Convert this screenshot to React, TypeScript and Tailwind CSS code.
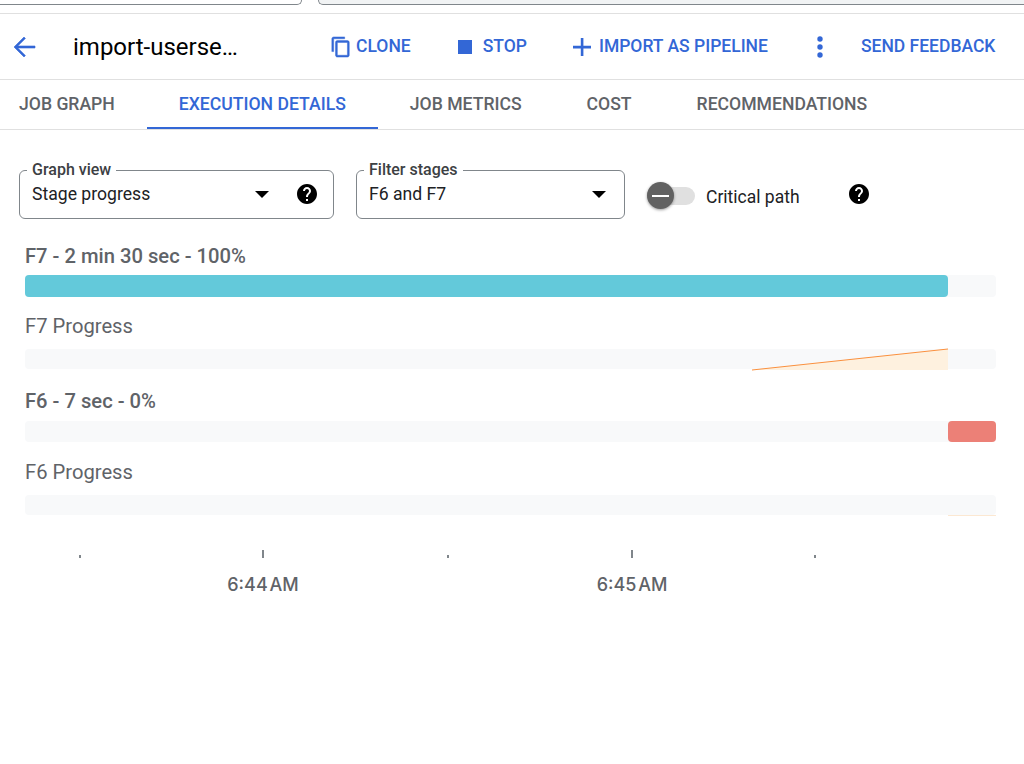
import React from 'react';

const BLUE = '#3367d6';

const HelpIcon = () => (
  <svg width="24" height="24" viewBox="0 0 24 24" fill="#000" className="shrink-0">
    <path d="M12 2C6.48 2 2 6.48 2 12s4.48 10 10 10 10-4.48 10-10S17.52 2 12 2zm1 17h-2v-2h2v2zm2.07-7.75l-.9.92C13.45 12.9 13 13.5 13 15h-2v-.5c0-1.1.45-2.1 1.17-2.83l1.24-1.26c.37-.36.59-.86.59-1.41 0-1.1-.9-2-2-2s-2 .9-2 2H8c0-2.21 1.79-4 4-4s4 1.79 4 4c0 .88-.36 1.68-.93 2.25z" />
  </svg>
);

const Caret = () => (
  <svg width="14" height="7" viewBox="0 0 14 7" fill="#000" className="shrink-0">
    <path d="M0 0h14L7 7z" />
  </svg>
);

const Select = ({ label, value, width, help }: { label: string; value: string; width: string; help?: boolean }) => (
  <div className={`relative h-[49px] ${width} shrink-0 rounded-[6px] border border-[#80868b] pl-[12px] pr-[14px] pt-[10px] flex items-start`}>
    <span className="absolute -top-[10px] left-[7px] bg-white px-[5px] text-[16px] leading-[17px] font-medium text-[#3c4043]">
      {label}
    </span>
    <span className="flex-1 text-[17.6px] leading-[26px] text-[#202124]">{value}</span>
    <div className={`flex items-center h-[26px] ${help ? 'gap-[26px]' : 'pr-[4px]'}`}>
      <Caret />
      {help && <HelpIcon />}
    </div>
  </div>
);

const Track = ({ h, children }: { h: string; children?: React.ReactNode }) => (
  <div className={`relative ${h} w-[971px] rounded-[4px] bg-[#f8f9fa]`}>{children}</div>
);

const Tab = ({ label, active }: { label: string; active?: boolean }) => (
  <div
    className={`h-full flex items-center justify-center text-[17.6px] font-medium whitespace-nowrap ${
      active ? 'w-[231px] text-[#3367d6] border-b-[2px] border-[#3367d6] pt-[2px]' : 'text-[#5f6368] pb-0'
    }`}
  >
    {label}
  </div>
);

export default function App() {
  return (
    <div className="w-[1024px] h-[764px] overflow-hidden bg-white font-['Roboto',sans-serif]">
      {/* bits of the page above */}
      <div className="h-[14px] border-b border-[#e0e0e0] flex items-start">
        <div className="w-[302px] h-[5px] border-b border-r border-[#80868b] rounded-br-[6px]" />
        <div className="ml-[16px] flex-1 h-[5px] bg-[#f1f3f4] border-b border-l border-[#80868b] rounded-bl-[6px]" />
      </div>

      {/* header */}
      <div className="h-[66px] border-b border-[#e0e0e0] flex items-center text-[#3367d6] text-[17.5px] font-medium">
        <svg width="24" height="24" viewBox="0 0 24 24" fill={BLUE} stroke={BLUE} strokeWidth="0.6" className="ml-[12px] shrink-0">
          <path d="M23 11H5.8l7.6-7.6L12 2 2 12l10 10 1.4-1.4L5.8 13H23z" />
        </svg>
        <span className="ml-[37px] w-[257px] text-[24px] font-normal text-[#000] whitespace-nowrap">import-userse…</span>
        <svg width="22" height="22" viewBox="0 0 24 24" fill={BLUE} stroke={BLUE} strokeWidth="0.5" className="shrink-0">
          <path d="M16 1H4c-1.1 0-2 .9-2 2v14h2V3h12V1zm3 4H8c-1.1 0-2 .9-2 2v14c0 1.1.9 2 2 2h11c1.1 0 2-.9 2-2V7c0-1.100-.9-2-2-2zm0 16H8V7h11v14z" />
        </svg>
        <span className="ml-[4px]">CLONE</span>
        <div className="ml-[47px] w-[14px] h-[14px] bg-[#3367d6] shrink-0" />
        <span className="ml-[11px]">STOP</span>
        <svg width="18" height="18" viewBox="0 0 18 18" fill={BLUE} className="ml-[46px] shrink-0">
          <path d="M7.800 0h2.600v7.800H18v2.600h-7.600V18H7.800v-7.600H0V7.800h7.800z" />
        </svg>
        <span className="ml-[8px] whitespace-nowrap">IMPORT AS PIPELINE</span>
        <svg width="6" height="22" viewBox="0 0 6 22" fill={BLUE} className="ml-[49px] shrink-0">
          <circle cx="3" cy="3" r="2.700" />
          <circle cx="3" cy="11" r="2.700" />
          <circle cx="3" cy="19" r="2.700" />
        </svg>
        <span className="ml-[38px] whitespace-nowrap">SEND FEEDBACK</span>
      </div>

      {/* tabs */}
      <div className="h-[50px] border-b border-[#e0e0e0] flex items-center pl-[19px]">
        <Tab label="JOB GRAPH" />
        <div className="w-[32px]" />
        <Tab label="EXECUTION DETAILS" active />
        <div className="w-[32px]" />
        <Tab label="JOB METRICS" />
        <div className="w-[65px]" />
        <Tab label="COST" />
        <div className="w-[65px]" />
        <Tab label="RECOMMENDATIONS" />
      </div>

      {/* controls */}
      <div className="mt-[40px] flex items-start pl-[19px]">
        <Select label="Graph view" value="Stage progress" width="w-[315px]" help />
        <div className="ml-[22px]">
          <Select label="Filter stages" value="F6 and F7" width="w-[269px]" />
        </div>
        <div className="ml-[22px] mt-[17px] h-[18px] flex items-center">
          <div className="relative w-[48px] h-[18px] rounded-full bg-[#e0e0e0]">
            <div className="absolute -top-[5px] left-0 w-[27px] h-[27px] rounded-full bg-[#616161] shadow-[0_1px_3px_rgba(0,0,0,0.4)] flex items-center justify-center">
              <div className="w-[17px] h-[2px] bg-white" />
            </div>
          </div>
          <span className="ml-[11px] mt-[2px] text-[17.5px] text-[#202124] whitespace-nowrap">Critical path</span>
          <div className="ml-[47px] -mt-[4px]">
            <HelpIcon />
          </div>
        </div>
      </div>

      {/* chart */}
      <div className="pl-[25px] mt-[25px] text-[20.2px] text-[#5f6368]">
        <div className="h-[24px] leading-[24px] font-medium">F7 - 2 min 30 sec - 100%</div>
        <div className="mt-[7px]">
          <Track h="h-[22px]">
            <div className="h-full w-[923px] rounded-[4px] bg-[#63c9da]" />
          </Track>
        </div>
        <div className="mt-[17px] h-[24px] leading-[24px]">F7 Progress</div>
        <div className="mt-[11px]">
          <Track h="h-[20px]">
            <svg width="971" height="22" viewBox="0 0 971 22" className="absolute left-0 top-0 overflow-visible">
              <polygon points="727,21 923,0 923,21" fill="#fef1df" />
              <line x1="727" y1="21" x2="923" y2="0" stroke="#fa903e" strokeWidth="1" />
            </svg>
          </Track>
        </div>
        <div className="mt-[20px] h-[24px] leading-[24px] font-medium">F6 - 7 sec - 0%</div>
        <div className="mt-[8px]">
          <Track h="h-[21px]">
            <div className="absolute left-[923px] top-0 h-[21px] w-[48px] rounded-[4px] bg-[#ec8077]" />
          </Track>
        </div>
        <div className="mt-[18px] h-[24px] leading-[24px]">F6 Progress</div>
        <div className="mt-[11px]">
          <Track h="h-[20px]">
            <div className="absolute left-[923px] top-[20px] h-px w-[48px] bg-[#fce8d2]" />
          </Track>
        </div>
      </div>

      {/* time axis */}
      <svg width="1024" height="60" viewBox="0 0 1024 60" className="block mt-[35px]">
        <g fill="#80868b">
          <rect x="79" y="5" width="2" height="3" />
          <rect x="262" y="0" width="2" height="8" />
          <rect x="447" y="5" width="2" height="3" />
          <rect x="631" y="0" width="2" height="8" />
          <rect x="814" y="5" width="2" height="3" />
        </g>
        <g fill="#5f6368" fontFamily="Inter, sans-serif" fontSize="18" fontWeight="500" textAnchor="middle" wordSpacing="-3">
          <text x="263" y="41">6:44 AM</text>
          <text x="632" y="41">6:45 AM</text>
        </g>
      </svg>
    </div>
  );
}
